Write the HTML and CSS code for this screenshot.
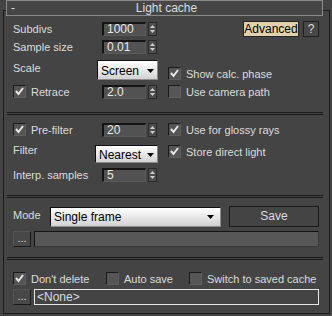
FILE: index.html
```html
<!DOCTYPE html>
<html lang="en">
<head>
    <meta charset="UTF-8">
    <title>Light cache</title>
    <link rel="stylesheet" href="styles.css">
</head>
<body>
    <div class="rollout">
        <div class="title"><span class="minus">-</span><span class="name">Light cache</span></div>

        <!-- calculation parameters -->
        <div class="sect s1">
            <div class="left">
                <div class="row h18"><span class="lbl">Subdivs</span>
                    <div class="spin"><span class="field">1000</span><svg class="arr" width="9" height="14"><rect x="0.5" y="0.5" width="8" height="13" fill="#4d4d4d" stroke="#2a2a2a"/><polygon points="2,6 7,6 4.5,3" fill="#cfcfcf"/><polygon points="2,8 7,8 4.5,11" fill="#cfcfcf"/></svg></div>
                </div>
                <div class="row h18"><span class="lbl">Sample size</span>
                    <div class="spin"><span class="field">0.01</span><svg class="arr" width="9" height="14"><rect x="0.5" y="0.5" width="8" height="13" fill="#4d4d4d" stroke="#2a2a2a"/><polygon points="2,6 7,6 4.5,3" fill="#cfcfcf"/><polygon points="2,8 7,8 4.5,11" fill="#cfcfcf"/></svg></div>
                </div>
                <div class="row h28"><span class="lbl up">Scale</span>
                    <div class="dd w61 tall"><span>Screen</span><svg width="7" height="4"><polygon points="0,0 7,0 3.5,4" fill="#000"/></svg></div>
                </div>
                <div class="row h15">
                    <span class="cb on"><svg width="11" height="11"><polyline points="2,5 4.5,8 9,2" fill="none" stroke="#e8e8e8" stroke-width="2"/></svg></span><span class="lbl">Retrace</span>
                    <div class="spin"><span class="field">2.0</span><svg class="arr" width="9" height="14"><rect x="0.5" y="0.5" width="8" height="13" fill="#4d4d4d" stroke="#2a2a2a"/><polygon points="2,6 7,6 4.5,3" fill="#cfcfcf"/><polygon points="2,8 7,8 4.5,11" fill="#cfcfcf"/></svg></div>
                </div>
            </div>
            <div class="right">
                <div class="adv-row"><span class="btn-adv">Advanced</span><span class="btn-help">?</span></div>
                <div class="row h15 gap-top"><span class="cb on"><svg width="11" height="11"><polyline points="2,5 4.5,8 9,2" fill="none" stroke="#e8e8e8" stroke-width="2"/></svg></span><span class="lbl">Show calc. phase</span></div>
                <div class="row h15 mt3"><span class="cb"></span><span class="lbl">Use camera path</span></div>
            </div>
        </div>

        <div class="sep"></div>

        <!-- filtering -->
        <div class="sect s2">
            <div class="left">
                <div class="row h17">
                    <span class="cb on"><svg width="11" height="11"><polyline points="2,5 4.5,8 9,2" fill="none" stroke="#e8e8e8" stroke-width="2"/></svg></span><span class="lbl">Pre-filter</span>
                    <div class="spin"><span class="field">20</span><svg class="arr" width="9" height="14"><rect x="0.5" y="0.5" width="8" height="13" fill="#4d4d4d" stroke="#2a2a2a"/><polygon points="2,6 7,6 4.5,3" fill="#cfcfcf"/><polygon points="2,8 7,8 4.5,11" fill="#cfcfcf"/></svg></div>
                </div>
                <div class="row h28"><span class="lbl up">Filter</span>
                    <div class="dd w63"><span>Nearest</span><svg width="7" height="4"><polygon points="0,0 7,0 3.5,4" fill="#000"/></svg></div>
                </div>
                <div class="row h17"><span class="lbl">Interp. samples</span>
                    <div class="spin"><span class="field">5</span><svg class="arr" width="9" height="14"><rect x="0.5" y="0.5" width="8" height="13" fill="#4d4d4d" stroke="#2a2a2a"/><polygon points="2,6 7,6 4.5,3" fill="#cfcfcf"/><polygon points="2,8 7,8 4.5,11" fill="#cfcfcf"/></svg></div>
                </div>
            </div>
            <div class="right">
                <div class="row h17"><span class="cb on"><svg width="11" height="11"><polyline points="2,5 4.5,8 9,2" fill="none" stroke="#e8e8e8" stroke-width="2"/></svg></span><span class="lbl">Use for glossy rays</span></div>
                <div class="row h17 mt5"><span class="cb on"><svg width="11" height="11"><polyline points="2,5 4.5,8 9,2" fill="none" stroke="#e8e8e8" stroke-width="2"/></svg></span><span class="lbl">Store direct light</span></div>
            </div>
        </div>

        <div class="sep"></div>

        <!-- mode -->
        <div class="sect s3">
            <div class="row h21">
                <span class="lbl mode-lbl">Mode</span>
                <div class="dd wide"><span>Single frame</span><svg width="7" height="4"><polygon points="0,0 7,0 3.5,4" fill="#000"/></svg></div>
                <span class="btn-save">Save</span>
            </div>
            <div class="row h16 mt4">
                <span class="btn-dots">...</span>
                <span class="progress"></span>
            </div>
        </div>

        <div class="sep"></div>

        <!-- cache file -->
        <div class="sect s4">
            <div class="row h15">
                <span class="opt w93"><span class="cb on"><svg width="11" height="11"><polyline points="2,5 4.5,8 9,2" fill="none" stroke="#e8e8e8" stroke-width="2"/></svg></span><span class="lbl">Don't delete</span></span>
                <span class="opt w83"><span class="cb"></span><span class="lbl">Auto save</span></span>
                <span class="opt"><span class="cb"></span><span class="lbl">Switch to saved cache</span></span>
            </div>
            <div class="row h16 mt3">
                <span class="btn-dots">...</span>
                <span class="file">&lt;None&gt;</span>
            </div>
        </div>
    </div>
</body>
</html>
```

FILE: styles.css
```css
body {
    margin: 0;
    width: 332px;
    height: 316px;
    overflow: hidden;
    background: #444444;
    font-family: "Liberation Sans", Arial, sans-serif;
    font-size: 11px;
    color: #dcdcdc;
}
.rollout {
    margin: 10px 2px 0 3px;
    height: 302px;
    border: 1px solid #1c1c1c;
    padding: 0 10px 0 9px;
    display: flex;
    flex-direction: column;
}
.title {
    box-sizing: border-box;
    height: 16px;
    margin: -11px -4px 0 -7px;
    border: 1px solid #8a8a8a;
    background: #464646;
    display: flex;
    align-items: center;
    line-height: 14px;
    font-size: 12px;
}
.minus {
    width: 0;
    margin-left: 4px;
}
.name {
    flex: 1;
    text-align: center;
}
.sect {
    display: flex;
}
.left {
    width: 145px;
    display: flex;
    flex-direction: column;
}
.right {
    flex: 1;
    margin-left: 10px;
    display: flex;
    flex-direction: column;
}
.s1 {
    padding: 4px 0 13px;
}
.s2 {
    padding: 6px 0 12px;
}
.s3 {
    flex-direction: column;
    padding: 8px 0 10px;
}
.s4 {
    flex-direction: column;
    padding: 11px 0 0;
}
.row {
    display: flex;
    align-items: center;
}
.h15 { height: 15px; }
.h16 { height: 16px; }
.h17 { height: 17px; }
.h18 { height: 18px; }
.h21 { height: 21px; }
.h28 { height: 28px; }
.mt3 { margin-top: 3px; }
.mt4 { margin-top: 4px; }
.mt5 { margin-top: 5px; }
.lbl {
    white-space: nowrap;
}
.left .lbl {
    flex: 1;
}
.lbl.up {
    margin-top: -5px;
}
.cb {
    box-sizing: border-box;
    width: 13px;
    height: 13px;
    flex: none;
    margin-right: 5px;
    border: 1px solid;
    border-color: #1a1a1a #5e5e5e #5e5e5e #1a1a1a;
    background: #555555;
    display: flex;
}
.spin {
    display: flex;
    align-items: center;
    gap: 2px;
    margin-right: 1px;
}
.field {
    box-sizing: border-box;
    width: 44px;
    height: 14px;
    padding-left: 3px;
    border-style: solid;
    border-width: 2px 1px 1px 2px;
    border-color: #141414 #5a5a5a #5a5a5a #141414;
    background: #525252;
    color: #e8e8e8;
    font-size: 12px;
    line-height: 11px;
}
.arr {
    display: block;
}
.dd {
    box-sizing: border-box;
    height: 18px;
    display: flex;
    align-items: center;
    justify-content: space-between;
    padding: 1px 3px 0 3px;
    border: 1px solid;
    border-color: #101010 #8c8c8c #8c8c8c #101010;
    background: linear-gradient(#ffffff, #d2d2d2);
    color: #000;
    font-size: 12px;
}
.dd.tall {
    height: 20px;
}
.w61 { width: 61px; }
.w63 { width: 63px; margin-top: 4px; }
.adv-row {
    display: flex;
    justify-content: flex-end;
    gap: 4px;
    margin-top: 1px;
    height: 16px;
}
.btn-adv {
    box-sizing: border-box;
    width: 56px;
    border: 1px solid #262626;
    background: #e2d2ab;
    color: #000;
    font-size: 12px;
    text-align: center;
    line-height: 14px;
}
.btn-help {
    box-sizing: border-box;
    width: 16px;
    border: 1px solid #1e1e1e;
    background: #474747;
    text-align: center;
    line-height: 14px;
    font-size: 12px;
}
.gap-top {
    margin-top: 29px;
}
.sep {
    height: 1px;
    margin: 0 -4px 0 -6px;
    border-top: 1px solid #1a1a1a;
    border-bottom: 1px solid #1a1a1a;
}
.mode-lbl {
    width: 37px;
    margin-top: -4px;
}
.dd.wide {
    width: 171px;
    height: 20px;
    padding: 1px 6px 0 3px;
}
.btn-save {
    box-sizing: border-box;
    width: 90px;
    height: 21px;
    margin-left: 8px;
    border: 1px solid #1a1a1a;
    background: #444444;
    text-align: center;
    line-height: 19px;
    font-size: 12px;
}
.btn-dots {
    box-sizing: border-box;
    width: 18px;
    height: 16px;
    border: 1px solid;
    border-color: #555 #1a1a1a #1a1a1a #555;
    background: #484848;
    text-align: center;
    line-height: 13px;
}
.progress {
    box-sizing: border-box;
    flex: 1;
    height: 16px;
    margin-left: 3px;
    border: 1px solid;
    border-color: #141414 #3a3a3a #3a3a3a #141414;
    background: #575757;
}
.opt {
    display: flex;
    align-items: center;
}
.w93 { width: 93px; }
.w83 { width: 83px; }
.file {
    box-sizing: border-box;
    flex: 1;
    height: 16px;
    margin-left: 3px;
    padding-left: 2px;
    border: 1px solid #e6e6e6;
    line-height: 14px;
    font-size: 12px;
}
```
